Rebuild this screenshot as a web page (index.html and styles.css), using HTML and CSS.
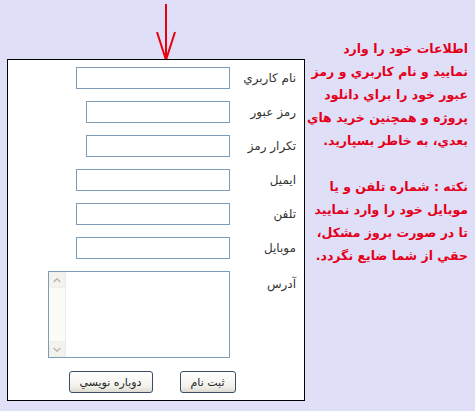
FILE: index.html
```html
<!DOCTYPE html>
<html lang="fa">
<head>
<meta charset="utf-8">
<link rel="stylesheet" href="styles.css">
</head>
<body>
<div class="page">
  <div class="form-col">
    <svg class="arrow" width="298" height="60" viewBox="0 0 298 60">
      <g stroke="#e8000e" stroke-width="2" fill="none">
        <line x1="159" y1="4" x2="159" y2="60"/>
        <polyline points="150,32 159,60 168,32"/>
      </g>
    </svg>
    <form class="box">
      <div class="row">
        <div class="field"><input class="inp w154" type="text"></div>
        <label class="lbl">نام کاربري</label>
      </div>
      <div class="row">
        <div class="field"><input class="inp w144" type="password"></div>
        <label class="lbl">رمز عبور</label>
      </div>
      <div class="row">
        <div class="field"><input class="inp w144" type="password"></div>
        <label class="lbl">تکرار رمز</label>
      </div>
      <div class="row">
        <div class="field"><input class="inp w154" type="text"></div>
        <label class="lbl">ايميل</label>
      </div>
      <div class="row">
        <div class="field"><input class="inp w154" type="text"></div>
        <label class="lbl">تلفن</label>
      </div>
      <div class="row">
        <div class="field"><input class="inp w154" type="text"></div>
        <label class="lbl">موبايل</label>
      </div>
      <div class="row area-row">
        <div class="field">
          <div class="area">
            <div class="sbar">
              <div class="sbtn">
                <svg width="15" height="15" viewBox="0 0 15 15"><polyline points="4,9 7.5,5.5 11,9" stroke="#b9b7ac" stroke-width="1.5" fill="none"/></svg>
              </div>
              <div class="strack"></div>
              <div class="sbtn">
                <svg width="15" height="15" viewBox="0 0 15 15"><polyline points="4,6 7.5,9.5 11,6" stroke="#b9b7ac" stroke-width="1.5" fill="none"/></svg>
              </div>
            </div>
            <textarea class="ta"></textarea>
          </div>
        </div>
        <label class="lbl lbl-top">آدرس</label>
      </div>
      <div class="buttons">
        <button type="button" class="btn w84">دوباره نويسي</button>
        <button type="button" class="btn w56">ثبت نام</button>
      </div>
    </form>
  </div>
  <div class="note">
    <p>اطلاعات خود را وارد<br>نمایید و نام کاربري و رمز<br>عبور خود را براي دانلود<br>پروژه و همچنين خريد هاي<br>بعدي، به خاطر بسپاريد.</p>
    <p>نكته : شماره تلفن و يا<br>موبايل خود را وارد نماييد<br>تا در صورت بروز مشكل،<br>حقي از شما ضايع نگردد.</p>
  </div>
</div>
</body>
</html>
```
FILE: styles.css
```css
html, body {
  margin: 0;
  padding: 0;
  background: #dfdff8;
}
.page {
  display: flex;
  align-items: flex-start;
  padding-left: 7px;
  font-family: "DejaVu Sans", sans-serif;
}
.form-col {
  width: 298px;
  display: flex;
  flex-direction: column;
}
.arrow {
  display: block;
  margin-bottom: -1px;
}
.box {
  box-sizing: border-box;
  width: 298px;
  height: 342px;
  margin: 0;
  border: 1px solid #000;
  background: #fff;
  padding: 7px 8px 0 0;
  display: flex;
  flex-direction: column;
  gap: 12px;
}
.row {
  display: flex;
  align-items: center;
  height: 22px;
}
.field {
  flex: 1;
  display: flex;
  justify-content: flex-end;
}
.lbl {
  width: 66px;
  direction: rtl;
  text-align: right;
  font-size: 12px;
  color: #333;
  line-height: 22px;
}
.inp {
  box-sizing: border-box;
  height: 22px;
  border: 1px solid #7f9db9;
  background: #fff;
  margin: 0;
  padding: 0 2px;
}
.w154 { width: 154px; }
.w144 { width: 144px; }
.area-row {
  height: 87px;
  align-items: flex-start;
}
.lbl-top {
  margin-top: 2px;
}
.area {
  box-sizing: border-box;
  width: 182px;
  height: 87px;
  border: 1px solid #7f9db9;
  display: flex;
  background: #fff;
}
.sbar {
  width: 16px;
  display: flex;
  flex-direction: column;
  background: #fbfbf8;
  border-right: 1px solid #eeede5;
}
.sbtn {
  height: 16px;
  box-sizing: border-box;
  border: 1px solid #f0efe8;
  background: #f3f2ec;
  border-radius: 2px;
  display: flex;
  align-items: center;
  justify-content: center;
}
.strack {
  flex: 1;
}
.ta {
  flex: 1;
  border: 0;
  margin: 0;
  padding: 0;
  resize: none;
  outline: none;
  background: #fff;
}
.buttons {
  display: flex;
  justify-content: center;
  gap: 27px;
  margin-top: 1px;
}
.btn {
  box-sizing: border-box;
  height: 22px;
  border: 1px solid #3c4e63;
  border-radius: 3px;
  background: linear-gradient(#ffffff, #f3f2ed 70%, #dcdad0);
  font-family: "DejaVu Sans", sans-serif;
  font-size: 11px;
  color: #222;
  direction: rtl;
  padding: 0;
}
.w84 { width: 84px; }
.w56 { width: 56px; }
.note {
  width: 162px;
  margin-left: 1px;
  margin-top: 37px;
  direction: rtl;
  text-align: right;
  white-space: nowrap;
  color: #e5001a;
  font-weight: bold;
  font-size: 12.5px;
  line-height: 23px;
}
.note p {
  margin: 0 0 23px 0;
}
```
